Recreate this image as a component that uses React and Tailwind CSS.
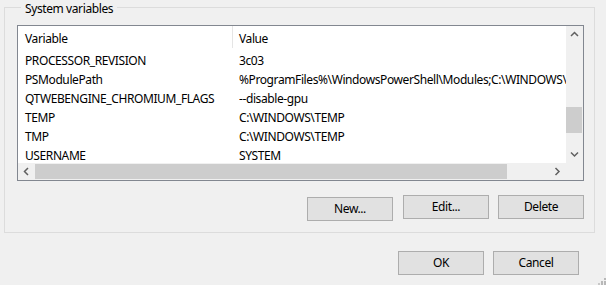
import React from 'react'

const rows = [
  ['PROCESSOR_REVISION', '3c03'],
  ['PSModulePath', '%ProgramFiles%\\WindowsPowerShell\\Modules;C:\\WINDOWS\\system32\\WindowsPowerShell\\v1.0\\Modules'],
  ['QTWEBENGINE_CHROMIUM_FLAGS', '--disable-gpu'],
  ['TEMP', 'C:\\WINDOWS\\TEMP'],
  ['TMP', 'C:\\WINDOWS\\TEMP'],
  ['USERNAME', 'SYSTEM'],
]

function Chevron({ dir }) {
  const paths = {
    up: 'M1 5 L4.5 1.5 L8 5',
    down: 'M1 1.5 L4.5 5 L8 1.5',
    left: 'M5 1 L1.5 4.5 L5 8',
    right: 'M1.5 1 L5 4.5 L1.5 8',
  }
  const vertical = dir === 'up' || dir === 'down'
  return (
    <svg
      width={vertical ? 9 : 7}
      height={vertical ? 7 : 9}
      viewBox={vertical ? '0 0 9 7' : '0 0 7 9'}
      fill="none"
      stroke="#606060"
      strokeWidth="1.5"
    >
      <path d={paths[dir]} />
    </svg>
  )
}

function Button({ children }) {
  return (
    <button className="w-[86px] h-[24px] bg-[#e1e1e1] border border-[#adadad] text-[12px] text-black leading-none">
      {children}
    </button>
  )
}

export default function App() {
  return (
    <div
      className="w-[606px] h-[285px] bg-[#f0f0f0] relative overflow-hidden text-black tracking-[-0.4px]"
      style={{ fontFamily: '"Noto Sans", "Liberation Sans", sans-serif' }}
    >
      <fieldset className="ml-[4px] w-[591px] h-[233px] border border-[#dcdcdc] pl-[12px] pr-0 pb-0 pt-0 m-0">
        <legend className="ml-[4px] px-[4px] text-[12px] leading-[14px]">
          <span className="relative top-[2px]">System variables</span>
        </legend>

        <div className="mt-[11px] w-[567px] h-[156px] border border-[#828790] bg-white flex flex-col">
          <div className="flex h-[137px]">
            <div className="w-[548px] overflow-hidden text-[12px]">
              <div className="flex h-[25px] items-center">
                <div className="w-[214px] pl-[7px]">Variable</div>
                <div className="w-px h-[22px] self-start bg-[#e5e5e5]" />
                <div className="pl-[6px]">Value</div>
              </div>
              {rows.map(([name, value]) => (
                <div key={name} className="flex h-[19px] items-center whitespace-nowrap">
                  <div className="w-[214px] pl-[7px] shrink-0">{name}</div>
                  <div className="pl-[7px]">{value}</div>
                </div>
              ))}
            </div>
            <div className="w-[17px] bg-[#f0f0f0] flex flex-col">
              <div className="h-[17px] flex items-center justify-center">
                <Chevron dir="up" />
              </div>
              <div className="flex-1">
                <div className="mt-[64px] w-[16px] h-[26px] bg-[#cdcdcd]" />
              </div>
              <div className="h-[17px] flex items-center justify-center">
                <Chevron dir="down" />
              </div>
            </div>
          </div>
          <div className="flex h-[17px]">
            <div className="w-[548px] bg-[#f0f0f0] flex">
              <div className="w-[17px] flex items-center justify-center">
                <Chevron dir="left" />
              </div>
              <div className="flex-1 flex items-center">
                <div className="w-[472px] h-[15px] bg-[#cdcdcd]" />
              </div>
              <div className="w-[17px] flex items-center justify-center">
                <Chevron dir="right" />
              </div>
            </div>
            <div className="w-[17px] bg-[#f0f0f0]" />
          </div>
        </div>

        <div className="mt-[14px] flex justify-end gap-[9px] pr-[10px]">
          <div className="mr-px">
            <Button>New...</Button>
          </div>
          <Button>Edit...</Button>
          <Button>Delete</Button>
        </div>
      </fieldset>

      <div className="mt-[18px] flex justify-end gap-[9px] pr-[27px]">
        <Button>OK</Button>
        <Button>Cancel</Button>
      </div>

      <svg className="absolute right-0 bottom-0" width="8" height="8" viewBox="0 0 8 8">
        <rect x="6" y="1" width="2" height="2" fill="#b8b8b8" />
        <rect x="3" y="4" width="2" height="2" fill="#b8b8b8" />
        <rect x="6" y="4" width="2" height="2" fill="#b8b8b8" />
        <rect x="0" y="6" width="2" height="2" fill="#c8c8c8" />
        <rect x="3" y="6" width="2" height="2" fill="#b8b8b8" />
        <rect x="6" y="6" width="2" height="2" fill="#b8b8b8" />
      </svg>
    </div>
  )
}
